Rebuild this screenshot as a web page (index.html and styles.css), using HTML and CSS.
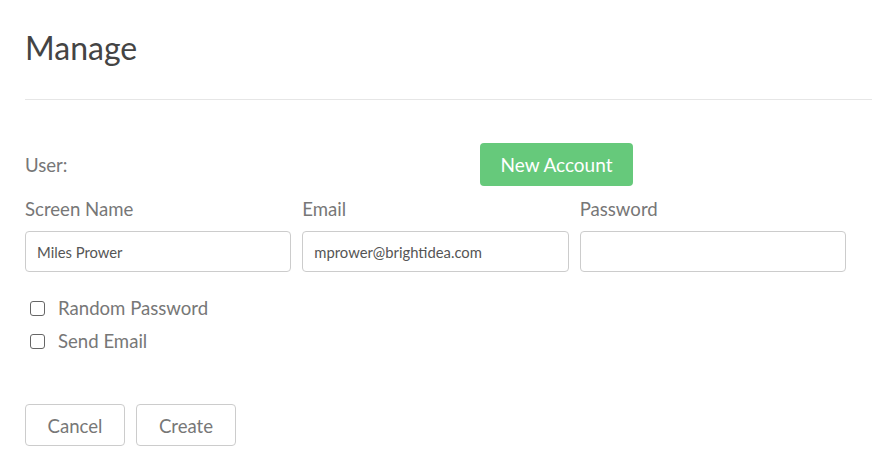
FILE: index.html
```html
<!DOCTYPE html>
<html lang="en">
<head>
    <meta charset="UTF-8">
    <meta name="viewport" content="width=device-width, initial-scale=1.0">
    <title>Manage</title>
    <link rel="stylesheet" href="styles.css">
</head>
<body>
    <div class="page">
        <h1 class="title">Manage</h1>
        <hr class="divider">

        <div class="user-row">
            <span class="user-label">User:</span>
            <button class="btn-new">New Account</button>
        </div>

        <div class="fields">
            <div class="field">
                <label>Screen Name</label>
                <input type="text" value="Miles Prower">
            </div>
            <div class="field">
                <label>Email</label>
                <input type="text" value="mprower@brightidea.com">
            </div>
            <div class="field">
                <label>Password</label>
                <input type="password" value="">
            </div>
        </div>

        <div class="checks">
            <label class="check"><input type="checkbox"> Random Password</label>
            <label class="check"><input type="checkbox"> Send Email</label>
        </div>

        <div class="actions">
            <button class="btn">Cancel</button>
            <button class="btn">Create</button>
        </div>
    </div>
</body>
</html>
```

FILE: styles.css
```css
* {
    margin: 0;
    box-sizing: border-box;
}

body {
    font-family: 'Lato', 'Liberation Sans', sans-serif;
    color: #777;
    background: white;
}

.page {
    padding: 28px 0 0 25px;
}

.title {
    font-size: 32px;
    font-weight: 400;
    color: #444;
    line-height: 40px;
}

.divider {
    border: none;
    border-top: 1px solid #e6e6e6;
    margin-top: 31px;
}

.user-row {
    display: flex;
    align-items: center;
    margin-top: 43px;
}

.user-label {
    font-size: 18.6px;
    width: 455px;
}

.btn-new {
    font-family: inherit;
    font-size: 19px;
    color: white;
    background: #66c97b;
    border: none;
    border-radius: 4px;
    width: 153px;
    height: 43px;
}

.fields {
    display: flex;
    width: 832px;
    margin-top: 12px;
}

.field {
    flex: 1;
    padding-right: 11px;
    display: flex;
    flex-direction: column;
}

.field label {
    font-size: 18.6px;
    line-height: 22px;
}

.field input {
    margin-top: 11px;
    height: 41px;
    border: 1px solid #ccc;
    border-radius: 4px;
    padding: 0 11px;
    font-family: inherit;
    font-size: 14.8px;
    color: #555;
}

.checks {
    margin-top: 19px;
    padding-left: 5px;
}

.check {
    display: flex;
    align-items: center;
    font-size: 18.6px;
    height: 33px;
}

.check input {
    appearance: none;
    width: 15px;
    height: 15px;
    border: 1px solid #666;
    border-radius: 3px;
    background: white;
    margin: 1px 13px 0 0;
}

.actions {
    display: flex;
    gap: 11px;
    margin-top: 47px;
}

.btn {
    font-family: inherit;
    font-size: 18.6px;
    color: #777;
    background: white;
    border: 1px solid #ccc;
    border-radius: 4px;
    width: 100px;
    height: 42px;
    padding-top: 2px;
}
```
